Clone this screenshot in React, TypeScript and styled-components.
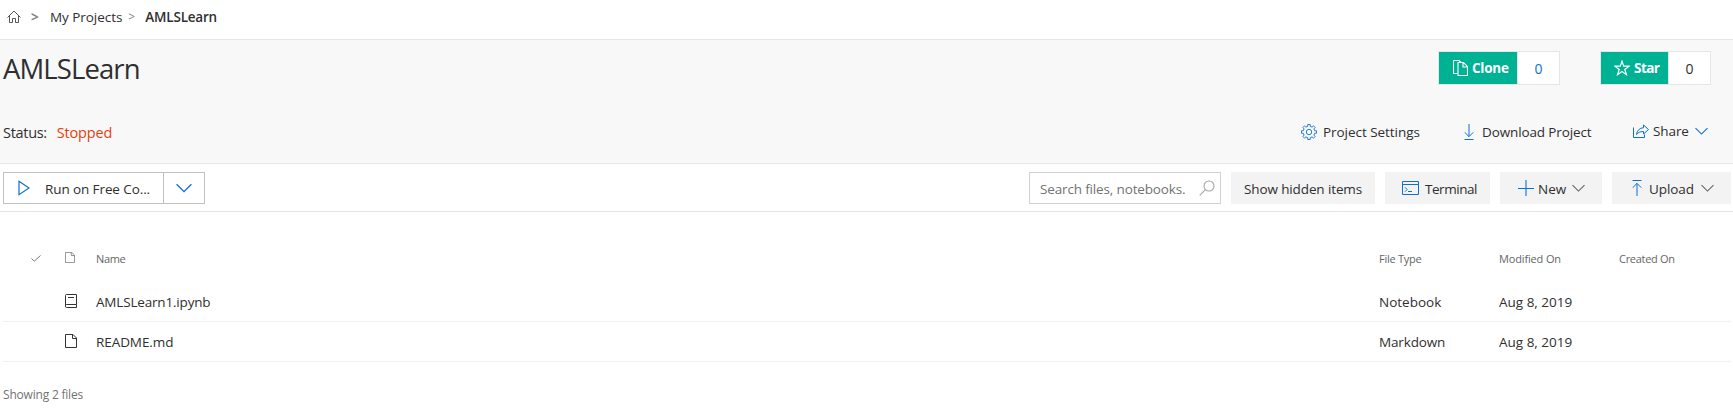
import React from "react";
import styled, { createGlobalStyle } from "styled-components";

const blue = "#0f6fd0";

const Global = createGlobalStyle`
  * { box-sizing: border-box; }
  body { margin: 0; background: #fff; color: #2f2f2f; font-family: "Open Sans", "Noto Sans", sans-serif; font-size: 13.5px; line-height: 20px; }
  button, input { font: inherit; color: inherit; }
  svg { display: block; flex: none; }
`;

const Page = styled.div`
  height: 411px;
  overflow: hidden;
`;

const Label = styled.span<{ $tight?: number }>`
  white-space: nowrap;
  letter-spacing: ${(p) => -(p.$tight ?? 0)}px;
`;

const Breadcrumb = styled.nav`
  height: 40px;
  display: flex;
  align-items: center;
  padding: 0 0 6px 7px;
  border-bottom: 1px solid #e6e6e6;
`;

const Crumb = styled(Label)<{ $current?: boolean }>`
  font-weight: ${(p) => (p.$current ? 600 : 400)};
`;

const Separator = styled.span<{ $left: number; $right: number; $bold?: boolean }>`
  width: 8px;
  margin: 0 ${(p) => p.$right}px 0 ${(p) => p.$left}px;
  color: #858585;
  font-size: ${(p) => (p.$bold ? 13.5 : 12)}px;
  font-weight: ${(p) => (p.$bold ? 700 : 400)};
`;

const Header = styled.header`
  height: 124px;
  background: #f8f8f8;
  border-bottom: 1px solid #e6e6e6;
`;

const HeaderRow = styled.div<{ $height: number }>`
  height: ${(p) => p.$height}px;
  display: flex;
  justify-content: space-between;
`;

const Title = styled.h1`
  margin: 10px 0 0 3px;
  font-size: 27.5px;
  line-height: 38px;
  font-weight: 400;
  letter-spacing: -0.9px;
`;

const Counters = styled.div`
  display: flex;
  gap: 40px;
  padding: 11px 22px 0 0;
`;

const Counter = styled.div<{ $width: number }>`
  width: ${(p) => p.$width}px;
  height: 34px;
  display: flex;
  border: 1px solid #e6e6e6;
  background: #fff;
`;

const CounterAction = styled.button<{ $width: number; $pad: number }>`
  width: ${(p) => p.$width}px;
  display: flex;
  align-items: center;
  gap: 4px;
  padding: 0 0 0 ${(p) => p.$pad}px;
  border: 0;
  background: #00b294;
  color: #fff;
  font-weight: 700;
`;

const CounterValue = styled.span<{ $link?: boolean }>`
  flex: 1;
  display: flex;
  align-items: center;
  justify-content: center;
  border-left: 1px solid #e6e6e6;
  padding-top: 1px;
  font-size: 14px;
  color: ${(p) => (p.$link ? blue : "#2f2f2f")};
`;

const Status = styled.div`
  display: flex;
  gap: 10px;
  padding: 23px 0 0 3px;
  font-size: 14.5px;
`;

const StatusValue = styled(Label)`
  color: #e8400c;
`;

const HeaderActions = styled.div`
  display: flex;
  align-items: flex-start;
  padding: 22px 25px 0 0;
`;

const HeaderAction = styled.a<{ $width: number; $gap: number; $raise?: boolean }>`
  width: ${(p) => p.$width}px;
  height: ${(p) => (p.$raise ? 18 : 20)}px;
  display: flex;
  align-items: center;
  gap: ${(p) => p.$gap}px;
`;

const ChevronSlot = styled.span<{ $left?: number; $drop?: number }>`
  margin-left: ${(p) => p.$left ?? 0}px;
  padding-top: ${(p) => p.$drop ?? 0}px;
`;

const Toolbar = styled.div`
  height: 48px;
  display: flex;
  align-items: flex-start;
  padding: 8px 2px 0 3px;
  border-bottom: 1px solid #e6e6e6;
`;

const ToolLabel = styled(Label)`
  padding-top: 2px;
`;

const RunGroup = styled.div`
  width: 202px;
  height: 32px;
  display: flex;
  border: 1px solid #c2c2c2;
  margin-right: auto;
`;

const RunButton = styled.button`
  width: 159px;
  display: flex;
  align-items: center;
  gap: 15px;
  padding: 0 0 0 14px;
  border: 0;
  background: #fff;
`;

const RunMenu = styled.button`
  flex: 1;
  display: flex;
  align-items: center;
  justify-content: center;
  padding: 0;
  border: 0;
  border-left: 1px solid #c2c2c2;
  background: #fff;
`;

const SearchBox = styled.label`
  width: 192px;
  height: 32px;
  display: flex;
  align-items: center;
  padding: 0 5px 0 10px;
  border: 1px solid #d2d2d2;
`;

const SearchInput = styled.input`
  width: 158px;
  padding: 2px 0 0;
  border: 0;
  outline: 0;
  background: transparent;
  margin-right: -12px;
  letter-spacing: -0.15px;
  flex: 1;
  &::placeholder { color: #737373; opacity: 1; }
`;

const ToolButton = styled.button<{ $width: number; $pad: number; $gap?: number }>`
  width: ${(p) => p.$width}px;
  height: 32px;
  display: flex;
  align-items: center;
  gap: ${(p) => p.$gap ?? 0}px;
  margin-left: 10px;
  padding: 0 0 0 ${(p) => p.$pad}px;
  border: 0;
  background: #f3f3f3;
`;

const Row = styled.div<{ $head?: boolean }>`
  margin: 0 2px 0 3px;
  height: ${(p) => (p.$head ? 44 : 40)}px;
  padding-bottom: ${(p) => (p.$head ? 2 : 0)}px;
  display: grid;
  grid-template-columns: 28px 34px 31px 1283px 120px 120px 1fr;
  align-items: center;
  border-bottom: 1px solid ${(p) => (p.$head ? "transparent" : "#f1f1f1")};
  color: ${(p) => (p.$head ? "#666" : "#2f2f2f")};
  font-size: ${(p) => (p.$head ? 11 : 13.5)}px;
`;

const Table = styled.section`
  padding-top: 26px;
`;

const IconCell = styled.span<{ $col: number; $lift?: number }>`
  grid-column: ${(p) => p.$col};
  padding-bottom: ${(p) => p.$lift ?? 0}px;
`;

const Cell = styled(Label)<{ $col: number }>`
  grid-column: ${(p) => p.$col};
`;

const Footer = styled.footer`
  padding: 23px 0 0 3px;
  color: #737373;
  font-size: 12px;
`;

const Chevron = ({ w = 13, color = "#666" }: { w?: number; color?: string }) => (
  <svg width={w} height={w * 0.62} viewBox="0 0 13 8" fill="none" stroke={color} strokeWidth="1.1"><path d="M.5 1l6 6 6-6" /></svg>
);

const HomeIcon = () => (
  <svg width="14" height="14" viewBox="0 0 14 14" fill="none" stroke="#444" strokeWidth=".9"><path d="M.5 7.500L7 1l6.500 6.500M2.500 6v6.500h3V8.500h3v4h3V6" /></svg>
);

const CloneIcon = () => (
  <svg width="15" height="16" viewBox="0 0 15 16" fill="none" stroke="#fff" strokeWidth="1.1"><path d="M4.500 13.500H.5V.5h5.500l2 2M5 2.500h5.500L14.500 6.500v9H5zM10 2.500V7h4.500" /></svg>
);

const StarIcon = () => (
  <svg width="16" height="16" viewBox="0 0 16 16" fill="none" stroke="#fff" strokeWidth="1.2"><path d="M8 1.200l1.700 5h5.500L10.800 9.400l1.700 5.300L8 11.500l-4.500 3.200 1.700-5.300L.8 6.200h5.500z" /></svg>
);

const GearIcon = () => {
  const teeth = Array.from({ length: 8 }, (_, i) => {
    const at = (r: number, d: number) => {
      const a = ((i * 45 + d) * Math.PI) / 180;
      return `${(8 + r * Math.cos(a)).toFixed(2)} ${(8 + r * Math.sin(a)).toFixed(2)}`;
    };
    return `${at(5.8, -13)}L${at(7.6, -9)}L${at(7.6, 9)}L${at(5.8, 13)}`;
  });
  return (
    <svg width="16" height="16" viewBox="0 0 16 16" fill="none" stroke={blue} strokeWidth=".9"><path d={`M${teeth.join("L")}Z`} /><circle cx="8" cy="8" r="2.700" /></svg>
  );
};

const DownloadIcon = () => (
  <svg width="10" height="16" viewBox="0 0 10 16" fill="none" stroke={blue} strokeWidth="1"><path d="M5 0v12.500M.7 8.300L5 12.600l4.300-4.300M.5 15.500h9" /></svg>
);

const UploadIcon = () => (
  <svg width="10" height="16" viewBox="0 0 10 16" fill="none" stroke={blue} strokeWidth="1"><path d="M.5.5h9M5 16V3.400M.7 7.700L5 3.400l4.300 4.300" /></svg>
);

const ShareIcon = () => (
  <svg width="16" height="14" viewBox="0 0 16 14" fill="none" stroke={blue} strokeWidth="1"><path d="M.5 3.500v10h11v-3M10.500 1l5 4.500-5 4.500V7.500C7 7.500 5 8.500 3.500 10.500c.5-4 3-6.500 7-6.800z" /></svg>
);

const TerminalIcon = () => (
  <svg width="17" height="14" viewBox="0 0 17 14" fill="none" stroke={blue} strokeWidth="1"><path d="M.5.5h16v13H.5zM.5 3.500h16M3 6.300l2.200 2.200L3 10.700M6 10.500h4" /></svg>
);

const PlusIcon = () => (
  <svg width="16" height="16" viewBox="0 0 16 16" stroke={blue} strokeWidth="1.100"><path d="M8 0v16M0 8.500h16" /></svg>
);

const PlayIcon = () => (
  <svg width="12" height="16" viewBox="0 0 12 16" fill="none" stroke={blue} strokeWidth="1.200"><path d="M1 1.300L11 8 1 14.700z" /></svg>
);

const SearchIcon = () => (
  <svg width="16" height="16" viewBox="0 0 16 16" fill="none" stroke="#a6a6a6" strokeWidth="1.100"><circle cx="10" cy="6" r="5" /><path d="M6.400 9.600L.7 15.300" /></svg>
);

const CheckIcon = () => (
  <svg width="10" height="7" viewBox="0 0 10 7" fill="none" stroke="#777" strokeWidth="1"><path d="M.5 3.500l2.700 2.700L9.500.5" /></svg>
);

const FileIcon = ({ small }: { small?: boolean }) => (
  <svg width={small ? 10 : 12} height={small ? 11 : 14} viewBox="0 0 12 14" preserveAspectRatio="none" fill="none" stroke={small ? "#777" : "#333"} strokeWidth="1"><path d="M.5.5h7.500l3.500 3.500v9.500H.5zM7.500.5v4h4" /></svg>
);

const NotebookIcon = () => (
  <svg width="12" height="14" viewBox="0 0 12 14" fill="none" stroke="#333" strokeWidth="1"><path d="M11.500 10.500V.5h-10q-1 0-1 1v10.500q0 1.500 1 1.500h10v-3h-10q-1 0-1 1M3 3.500h6" /></svg>
);

export default function App() {
  return (
    <Page>
      <Global />
      <Breadcrumb>
        <HomeIcon />
        <Separator $left={10} $right={11} $bold>&gt;</Separator>
        <Crumb $tight={0.05}>My Projects</Crumb>
        <Separator $left={6} $right={9}>&gt;</Separator>
        <Crumb $current $tight={0.2}>AMLSLearn</Crumb>
      </Breadcrumb>
      <Header>
        <HeaderRow $height={60}>
          <Title>AMLSLearn</Title>
          <Counters>
            <Counter $width={122}>
              <CounterAction $width={78} $pad={14}><CloneIcon /><Label $tight={0.25}>Clone</Label></CounterAction>
              <CounterValue $link>0</CounterValue>
            </Counter>
            <Counter $width={111}>
              <CounterAction $width={67} $pad={13}><StarIcon /><Label $tight={0.55}>Star</Label></CounterAction>
              <CounterValue>0</CounterValue>
            </Counter>
          </Counters>
        </HeaderRow>
        <HeaderRow $height={63}>
          <Status>
            <Label $tight={0.3}>Status:</Label>
            <StatusValue $tight={0.2}>Stopped</StatusValue>
          </Status>
          <HeaderActions>
            <HeaderAction $width={163} $gap={6}><GearIcon /><Label $tight={0.05}>Project Settings</Label></HeaderAction>
            <HeaderAction $width={169} $gap={8}><DownloadIcon /><Label $tight={0.13}>Download Project</Label></HeaderAction>
            <HeaderAction $width={75} $gap={4} $raise><ShareIcon /><Label $tight={0.1}>Share</Label><ChevronSlot $left={2} $drop={1}><Chevron color={blue} /></ChevronSlot></HeaderAction>
          </HeaderActions>
        </HeaderRow>
      </Header>
      <Toolbar>
        <RunGroup>
          <RunButton><PlayIcon /><ToolLabel $tight={0.1}>Run on Free Co...</ToolLabel></RunButton>
          <RunMenu><Chevron w={16} color={blue} /></RunMenu>
        </RunGroup>
        <SearchBox>
          <SearchInput placeholder="Search files, notebooks." />
          <SearchIcon />
        </SearchBox>
        <ToolButton $width={144} $pad={13}><ToolLabel $tight={0.12}>Show hidden items</ToolLabel></ToolButton>
        <ToolButton $width={105} $pad={17} $gap={6}><TerminalIcon /><ToolLabel $tight={0.45}>Terminal</ToolLabel></ToolButton>
        <ToolButton $width={102} $pad={18} $gap={4}><PlusIcon /><ToolLabel>New</ToolLabel><ChevronSlot $left={2}><Chevron /></ChevronSlot></ToolButton>
        <ToolButton $width={119} $pad={20} $gap={7}><UploadIcon /><ToolLabel $tight={0.1}>Upload</ToolLabel><Chevron /></ToolButton>
      </Toolbar>
      <Table>
        <Row $head>
          <IconCell $col={2}><CheckIcon /></IconCell>
          <IconCell $col={3} $lift={2}><FileIcon small /></IconCell>
          <Cell $col={4} $tight={0.35}>Name</Cell>
          <Cell $col={5} $tight={0.25}>File Type</Cell>
          <Cell $col={6} $tight={0.15}>Modified On</Cell>
          <Cell $col={7} $tight={0.3}>Created On</Cell>
        </Row>
        <Row>
          <IconCell $col={3} $lift={1}><NotebookIcon /></IconCell>
          <Cell $col={4} $tight={0.18}>AMLSLearn1.ipynb</Cell>
          <Cell $col={5}>Notebook</Cell>
          <Cell $col={6}>Aug 8, 2019</Cell>
        </Row>
        <Row>
          <IconCell $col={3} $lift={1}><FileIcon /></IconCell>
          <Cell $col={4} $tight={0.08}>README.md</Cell>
          <Cell $col={5} $tight={0.15}>Markdown</Cell>
          <Cell $col={6}>Aug 8, 2019</Cell>
        </Row>
      </Table>
      <Footer><Label $tight={0.2}>Showing 2 files</Label></Footer>
    </Page>
  );
}
